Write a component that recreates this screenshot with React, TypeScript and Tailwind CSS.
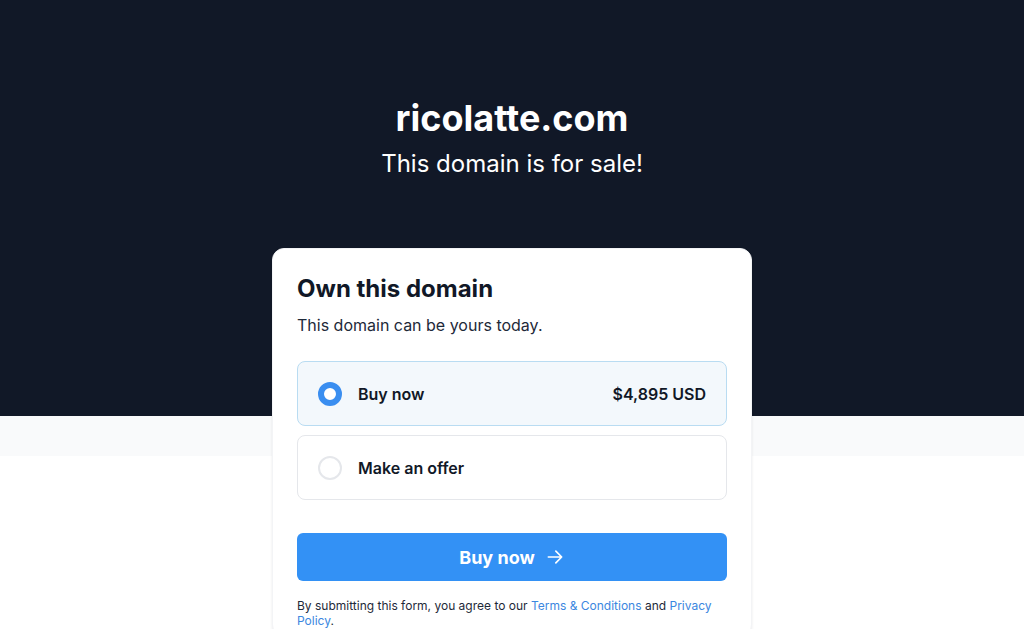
import React from 'react';

const App: React.FC = () => {
  return (
    <div
      className="min-h-[629px] bg-[linear-gradient(to_bottom,#111827_0,#111827_416px,#f9fafb_416px,#f9fafb_456px,#ffffff_456px)] text-gray-900"
      style={{ fontFamily: 'Inter, "Noto Sans", sans-serif' }}
    >
      <header className="flex flex-col items-center pt-[96px] text-white">
        <h1 className="text-[36px] leading-[44px] font-bold">ricolatte.com</h1>
        <p className="mt-[8px] text-[24px] leading-[32px]">This domain is for sale!</p>
      </header>

      <div className="flex justify-center pt-[68px]">
        <div className="w-[480px] bg-white rounded-xl shadow-[0_1px_3px_rgba(0,0,0,0.08)] border border-gray-100 px-[24px] pt-[24px] pb-[8px]">
          <h2 className="text-[24px] leading-[32px] font-bold text-[#111827]">Own this domain</h2>
          <p className="mt-[8px] text-[16px] leading-[24px] text-gray-800">This domain can be yours today.</p>

          <div className="mt-[24px] flex flex-col gap-[9px]">
            <label className="flex items-center h-[65px] px-[20px] rounded-lg border border-[#b9dcf2] bg-[#f3f8fc]">
              <span className="w-[24px] h-[24px] rounded-full border-[6px] border-[#3a8ef0] bg-white" />
              <span className="ml-[16px] text-[16px] font-semibold text-[#111827]">Buy now</span>
              <span className="ml-auto text-[16px] font-semibold text-[#111827]">$4,895 USD</span>
            </label>
            <label className="flex items-center h-[65px] px-[20px] rounded-lg border border-gray-200 bg-white">
              <span className="w-[24px] h-[24px] rounded-full border-2 border-gray-200 bg-white" />
              <span className="ml-[16px] text-[16px] font-semibold text-[#111827]">Make an offer</span>
            </label>
          </div>

          <button className="mt-[33px] w-full h-[48px] rounded-md bg-[#3391f5] text-white text-[18px] font-bold flex items-center justify-center gap-[10px]">
            Buy now
            <svg className="w-[20px] h-[20px]" fill="none" stroke="currentColor" viewBox="0 0 24 24">
              <path strokeLinecap="round" strokeLinejoin="round" strokeWidth="2" d="M4 12h16m-7-7l7 7-7 7" />
            </svg>
          </button>

          <p className="mt-[17px] text-[12px] leading-[15px] text-gray-800">
            By submitting this form, you agree to our <a className="text-[#3b87e0]">Terms &amp; Conditions</a> and{' '}
            <a className="text-[#3b87e0]">Privacy Policy</a>.
          </p>
        </div>
      </div>
    </div>
  );
};

export default App;
